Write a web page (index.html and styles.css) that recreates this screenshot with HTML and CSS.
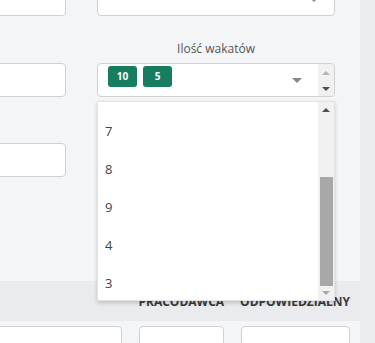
FILE: index.html
```html
<!DOCTYPE html>
<html lang="pl">
<head>
  <meta charset="UTF-8">
  <meta name="viewport" content="width=device-width, initial-scale=1.0">
  <title>Oferta pracy</title>
  <link rel="stylesheet" href="styles.css">
</head>
<body>
  <div class="screen">
    <div class="main">
      <div class="row row-top">
        <div class="col-left"><div class="field"></div></div>
        <div class="col-right">
          <div class="field select-field"><span class="caret small"></span></div>
        </div>
      </div>

      <div class="row row-mid">
        <div class="col-left"><div class="field"></div></div>
        <div class="col-right">
          <label class="label">Ilość wakatów</label>
          <div class="field multi">
            <div class="tags">
              <span class="tag">10</span>
              <span class="tag">5</span>
            </div>
            <span class="caret"></span>
            <div class="spin">
              <span class="arr up light"></span>
              <span class="arr down"></span>
            </div>
          </div>
        </div>
      </div>

      <div class="row row-low">
        <div class="col-left"><div class="field"></div></div>
      </div>

      <div class="table-head">
        <span>Pracodawca</span>
        <span>Odpowiedzialny</span>
      </div>

      <div class="row-bottom">
        <div class="field w1"></div>
        <div class="field w2"></div>
        <div class="field w3"></div>
      </div>

      <div class="dropdown">
        <ul class="options">
          <li>7</li>
          <li>8</li>
          <li>9</li>
          <li>4</li>
          <li>3</li>
        </ul>
        <div class="scrollbar">
          <span class="arr up"></span>
          <div class="thumb"></div>
          <span class="arr down light"></span>
        </div>
      </div>
    </div>
    <div class="side"></div>
  </div>
</body>
</html>
```

FILE: styles.css
```css
body { margin: 0; font-family: "Open Sans", "Liberation Sans", sans-serif; background: #f4f5f7; color: #333; }
.screen { display: flex; height: 343px; overflow: hidden; }
.main { width: 360px; position: relative; }
.side { flex: 1; background: #ecedf1; }

.row { display: flex; gap: 31px; margin-left: -14px; }
.col-left { width: 80px; }
.col-right { width: 238px; }
.row-top { margin-top: -18px; }
.row-mid { margin-top: 24px; align-items: flex-end; }
.row-low { margin-top: 46px; }

.field { height: 34px; box-sizing: border-box; background: #fff; border: 1px solid #cfd1d4; border-radius: 4px; position: relative; }
.label { display: block; text-align: center; font-size: 12px; line-height: 18px; color: #555; margin-bottom: 5px; }

.caret { position: absolute; right: 32px; top: 14px; border-left: 5px solid transparent; border-right: 5px solid transparent; border-top: 5px solid #888; }
.caret.small { right: 17px; top: 16px; border-width: 3px; border-top-width: 3px; }

.multi { display: flex; }
.tags { display: flex; gap: 6px; padding: 2px 0 0 10px; }
.tag { width: 29px; height: 21px; line-height: 21px; text-align: center; background: #177d61; color: #fff; font-size: 10px; font-weight: bold; border-radius: 3px; }
.spin { position: absolute; right: 0; top: 0; bottom: 0; width: 16px; background: #f1f1f1; border-radius: 0 4px 4px 0; }

.arr { position: absolute; left: 4px; border-left: 4px solid transparent; border-right: 4px solid transparent; }
.arr.up { border-bottom: 4px solid #505050; }
.arr.down { border-top: 4px solid #505050; }
.arr.up.light { border-bottom-color: #b5b5b5; }
.arr.down.light { border-top-color: #a8a8a8; }
.spin .up { top: 7px; }
.spin .down { top: 23px; }

.table-head { margin-top: 104px; height: 40px; background: #e9ebee; display: flex; justify-content: flex-end; align-items: center; gap: 16px; padding-right: 10px; font-size: 12px; font-weight: bold; text-transform: uppercase; color: #3a3a3a; }
.row-bottom { display: flex; gap: 17px; margin-top: 5px; margin-left: -10px; }
.row-bottom .field { height: 30px; }
.w1 { width: 132px; }
.w2 { width: 85px; }
.w3 { width: 109px; }

.dropdown { position: absolute; top: 101px; left: 97px; width: 238px; height: 200px; box-sizing: border-box; background: #fff; border: 1px solid #e2e3e5; box-shadow: 0 2px 4px rgba(0,0,0,0.18); overflow: hidden; }
.options { list-style: none; margin: 10px 0 0; padding: 0; }
.options li { height: 38px; line-height: 38px; padding-left: 7px; font-size: 13px; color: #444; }
.scrollbar { position: absolute; right: 0; top: 0; bottom: 0; width: 16px; background: #f1f1f1; }
.scrollbar .up { top: 6px; }
.scrollbar .down { bottom: 5px; }
.thumb { position: absolute; left: 2px; right: 1px; top: 75px; height: 109px; background: #a8a8a8; }
```
